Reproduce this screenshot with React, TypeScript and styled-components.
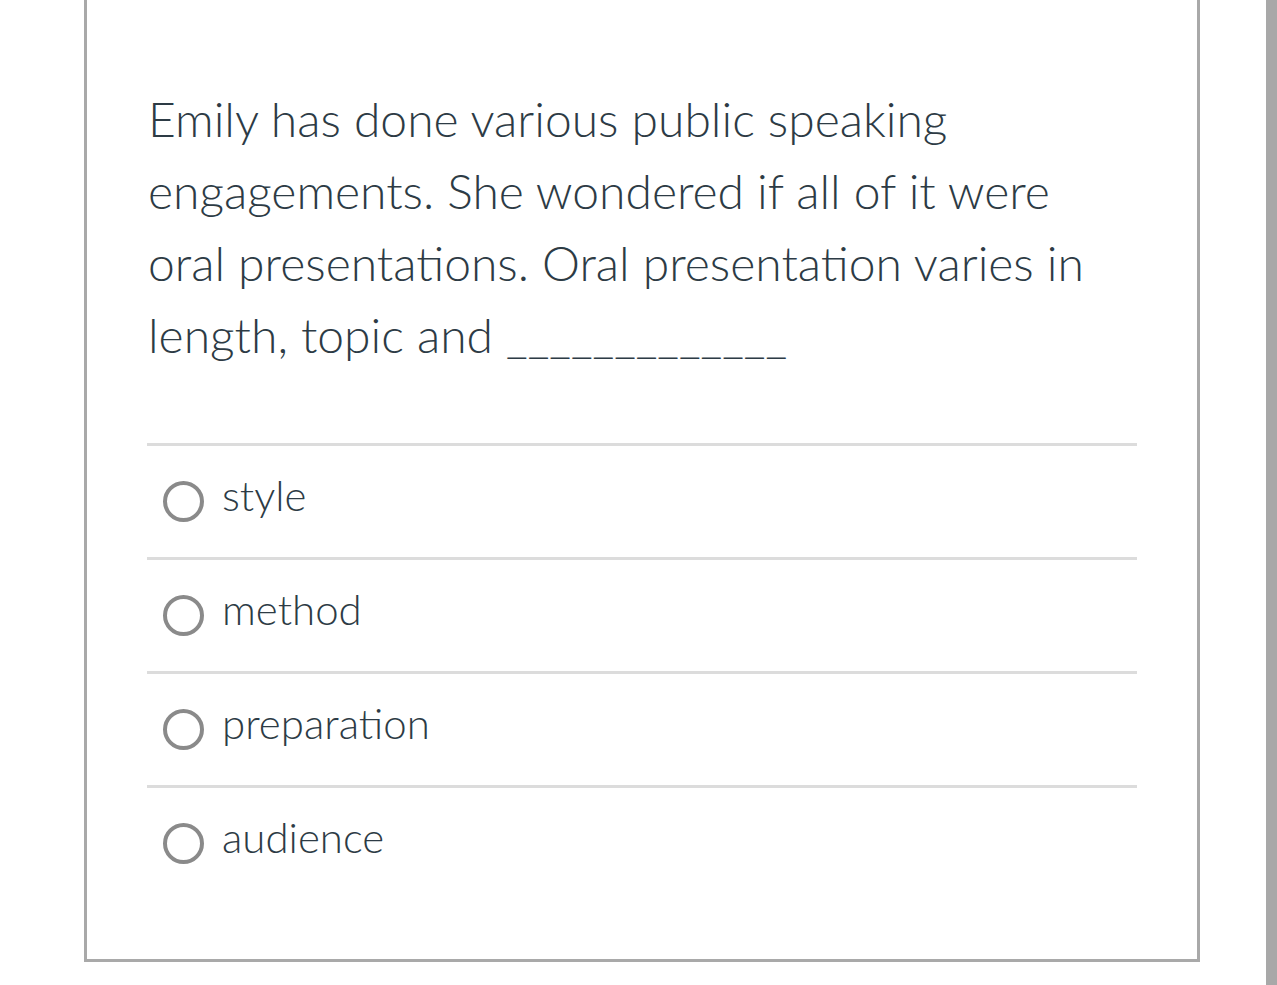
import React from "react";
import styled, { createGlobalStyle } from "styled-components";

const GlobalStyle = createGlobalStyle`
  html, body {
    margin: 0;
    padding: 0;
    background: #ffffff;
  }
  body {
    font-family: Lato, "Open Sans", "Liberation Sans", sans-serif;
    color: #2d3b45;
  }
`;

const Page = styled.div`
  display: flex;
  align-items: flex-start;
  height: 985px;
  overflow: hidden;
`;

const Card = styled.section`
  box-sizing: border-box;
  margin-left: 84px;
  width: 1116px;
  height: 962px;
  border: 3px solid #a9a9a9;
  border-top: none;
  padding: 83px 61px 0 61px;
`;

const Question = styled.p`
  margin: 0;
  max-width: 960px;
  font-size: 48px;
  line-height: 72px;
  font-weight: 300;
  color: #2d3b45;
`;

const Answers = styled.ul`
  list-style: none;
  margin: 72px 0 0 -1px;
  padding: 0;
  width: 990px;
`;

const Answer = styled.li`
  display: flex;
  align-items: center;
  gap: 18px;
  height: 111px;
  padding-left: 16px;
  border-top: 3px solid #dcdcdc;
`;

const Radio = styled.span`
  box-sizing: border-box;
  width: 41px;
  height: 41px;
  border-radius: 50%;
  border: 4px solid #8a8a8a;
  flex: none;
`;

const Label = styled.span`
  font-size: 42px;
  font-weight: 300;
  color: #2d3b45;
  margin-bottom: 14px;
`;

const Scrollbar = styled.div`
  margin-left: auto;
  width: 11px;
  height: 985px;
  background: #a8a8a8;
`;

const options = ["style", "method", "preparation", "audience"];

export default function App() {
  return (
    <>
      <GlobalStyle />
      <Page>
        <Card>
          <Question>
            Emily has done various public speaking engagements. She wondered if
            all of it were oral presentations. Oral presentation varies in
            length, topic and _____________
          </Question>
          <Answers>
            {options.map((o) => (
              <Answer key={o}>
                <Radio />
                <Label>{o}</Label>
              </Answer>
            ))}
          </Answers>
        </Card>
        <Scrollbar />
      </Page>
    </>
  );
}
